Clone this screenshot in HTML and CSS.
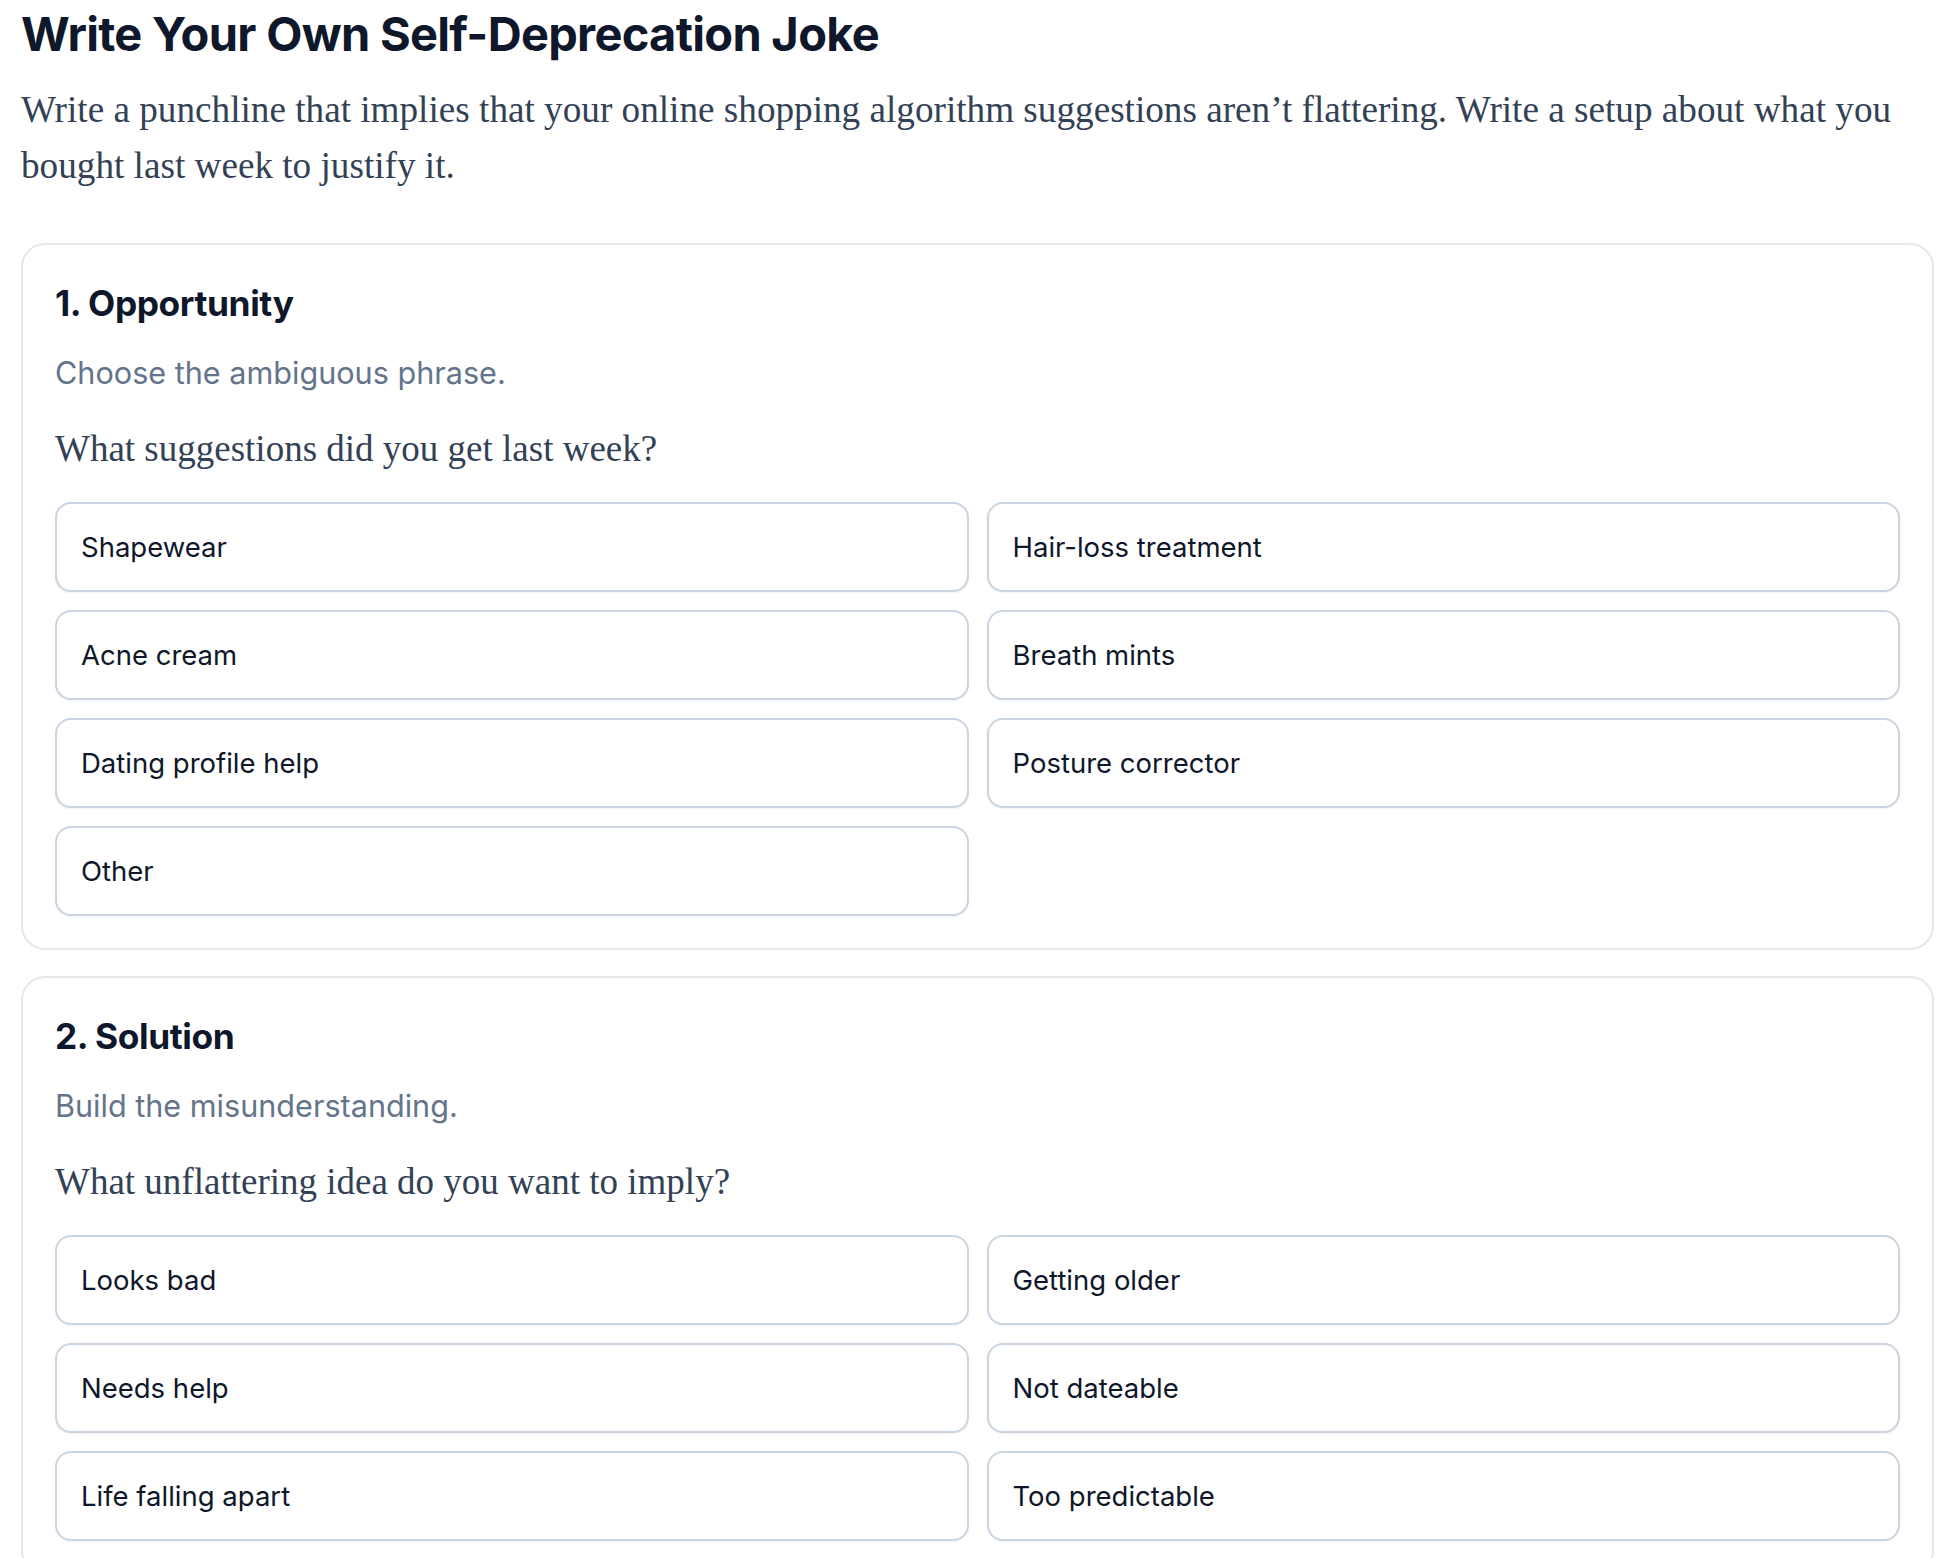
FILE: index.html
```html
<!DOCTYPE html>
<html lang="en">
<head>
<meta charset="utf-8">
<title>Write Your Own Self-Deprecation Joke</title>
<link rel="stylesheet" href="styles.css">
</head>
<body>
<main class="page">
  <h1 class="title">Write Your Own Self-Deprecation Joke</h1>
  <p class="intro">Write a punchline that implies that your online shopping algorithm suggestions aren’t flattering. Write a setup about what you bought last week to justify it.</p>

  <section class="card">
    <h2 class="card-title">1. Opportunity</h2>
    <p class="card-sub">Choose the ambiguous phrase.</p>
    <p class="question">What suggestions did you get last week?</p>
    <div class="options">
      <button class="option">Shapewear</button>
      <button class="option">Hair-loss treatment</button>
      <button class="option">Acne cream</button>
      <button class="option">Breath mints</button>
      <button class="option">Dating profile help</button>
      <button class="option">Posture corrector</button>
      <button class="option">Other</button>
    </div>
  </section>

  <section class="card">
    <h2 class="card-title">2. Solution</h2>
    <p class="card-sub">Build the misunderstanding.</p>
    <p class="question">What unflattering idea do you want to imply?</p>
    <div class="options">
      <button class="option">Looks bad</button>
      <button class="option">Getting older</button>
      <button class="option">Needs help</button>
      <button class="option">Not dateable</button>
      <button class="option">Life falling apart</button>
      <button class="option">Too predictable</button>
    </div>
  </section>
</main>
</body>
</html>
```

FILE: styles.css
```css
html, body {
  margin: 0;
  padding: 0;
  background: #ffffff;
}

.page {
  padding: 10px 20px 0 21px;
  font-family: Inter, "Liberation Sans", sans-serif;
  color: #0f172a;
}

.title {
  margin: 0;
  font-size: 47px;
  line-height: 48px;
  font-weight: 700;
  letter-spacing: -0.7px;
  color: #0f172a;
}

.intro {
  margin: 24px 0 0;
  font-family: "Liberation Serif", "DejaVu Serif", serif;
  font-size: 37.2px;
  line-height: 56px;
  color: #334155;
}

.card {
  margin-top: 49px;
  border: 2px solid #e5e7eb;
  border-radius: 24px;
  padding: 41px 32px 32px 32px;
  background: #fff;
}

.card + .card {
  margin-top: 26px;
}

.card-title {
  margin: 0;
  font-size: 35.3px;
  line-height: 36px;
  font-weight: 700;
  letter-spacing: -0.4px;
  color: #0f172a;
}

.card-sub {
  margin: 31px 0 0;
  font-size: 30.6px;
  line-height: 40px;
  color: #64748b;
}

.question {
  margin: 34px 0 0;
  font-family: "Liberation Serif", "DejaVu Serif", serif;
  font-size: 37px;
  line-height: 44px;
  color: #334155;
}

.options {
  margin-top: 31px;
  display: grid;
  grid-template-columns: 1fr 1fr;
  gap: 18px;
}

.option {
  height: 90px;
  display: flex;
  align-items: center;
  padding: 0 24px;
  border: 2px solid #cbd5e1;
  border-radius: 16px;
  background: #fff;
  box-shadow: 0 1px 2px rgba(15, 23, 42, 0.06);
  font-family: Inter, "Liberation Sans", sans-serif;
  font-size: 27.5px;
  color: #0f172a;
  text-align: left;
  cursor: pointer;
}
```
